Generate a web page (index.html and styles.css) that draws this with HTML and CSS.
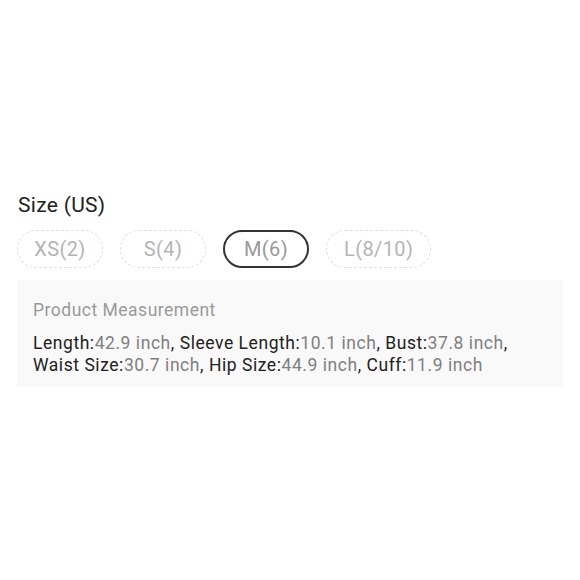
FILE: index.html
```html
<!DOCTYPE html>
<html>
<head>
<meta charset="utf-8">
<link rel="stylesheet" href="styles.css">
</head>
<body>
<div class="page">
  <div class="title">Size (US)</div>
  <div class="chips">
    <span class="chip disabled">XS(2)</span>
    <span class="chip disabled">S(4)</span>
    <span class="chip selected">M(6)</span>
    <span class="chip disabled wide">L(8/10)</span>
  </div>
  <div class="measure">
    <div class="measure-title">Product Measurement</div>
    <div class="measure-text"><b>Length:</b><span>42.9 inch</span>, <b>Sleeve Length:</b><span>10.1 inch</span>, <b>Bust:</b><span>37.8 inch</span>,<br><b>Waist Size:</b><span>30.7 inch</span>, <b>Hip Size:</b><span>44.9 inch</span>, <b>Cuff:</b><span>11.9 inch</span></div>
  </div>
</div>
</body>
</html>
```
FILE: styles.css
```css
html, body {
  margin: 0;
  padding: 0;
  background: #fff;
}
body {
  font-family: Roboto, "Noto Sans", sans-serif;
}
.page {
  padding: 192px 17px 0 17px;
}
.title {
  font-size: 21px;
  line-height: 27px;
  letter-spacing: 0.3px;
  color: #222;
  padding-left: 1px;
}
.chips {
  display: flex;
  gap: 17px;
  margin-top: 11px;
}
.chip {
  box-sizing: border-box;
  min-width: 86px;
  height: 38px;
  padding: 0 16px;
  border-radius: 19px;
  display: flex;
  align-items: center;
  justify-content: center;
  font-size: 20px;
  letter-spacing: 0.4px;
  color: #b5b5b5;
}
.chip.wide {
  padding: 0 17px;
}
.chip.disabled {
  border: 1px dashed #dedede;
}
.chip.selected {
  border: 2px solid #333;
  color: #999;
}
.measure {
  margin-top: 12px;
  width: 546px;
  box-sizing: border-box;
  background: #f9f9f9;
  padding: 19px 16px 11px 16px;
}
.measure-title {
  font-size: 17.5px;
  line-height: 23px;
  letter-spacing: 0.5px;
  color: #999;
}
.measure-text {
  margin-top: 10px;
  font-size: 17.5px;
  line-height: 22px;
  letter-spacing: 0.55px;
  color: #222;
}
.measure-text b {
  font-weight: 400;
  color: #222;
}
.measure-text span {
  color: #808080;
}
```
